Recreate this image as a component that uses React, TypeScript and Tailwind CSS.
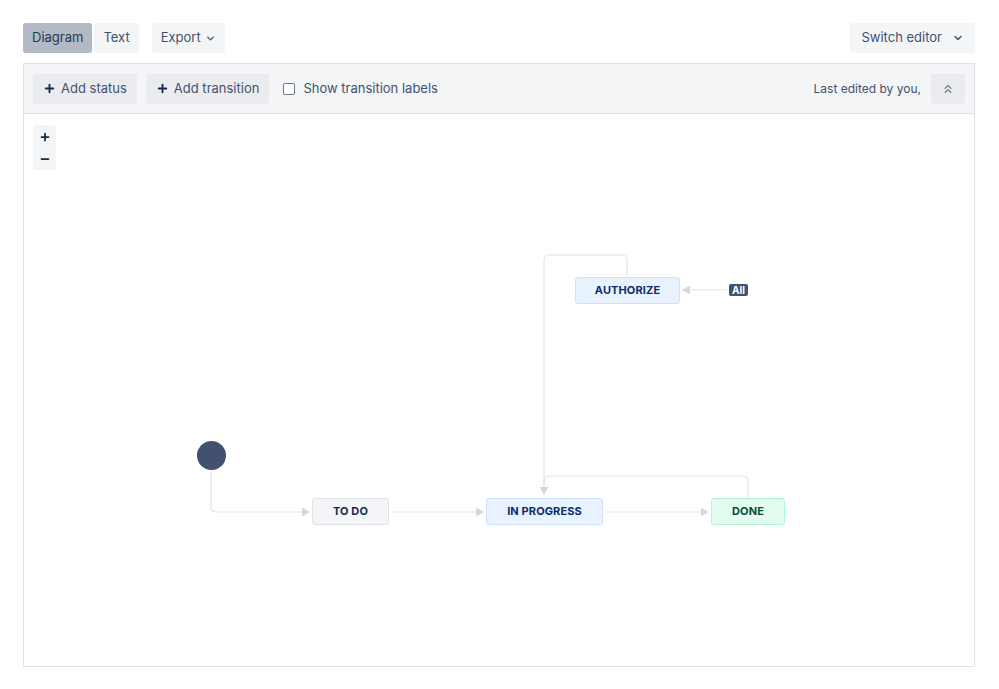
import * as React from "react";
import { ChevronDown, ChevronsUp, Plus, Minus } from "lucide-react";

type Node = {
  label: string;
  x: number;
  y: number;
  w: number;
  tone: "gray" | "blue" | "green";
};

// positions are relative to the canvas (top-left inside the panel border)
const nodes: Node[] = [
  { label: "TO DO", x: 288, y: 384, w: 77, tone: "gray" },
  { label: "IN PROGRESS", x: 462, y: 384, w: 117, tone: "blue" },
  { label: "DONE", x: 687, y: 384, w: 74, tone: "green" },
  { label: "AUTHORIZE", x: 551, y: 163, w: 105, tone: "blue" },
];

const toneClass: Record<Node["tone"], string> = {
  gray: "bg-[#f4f5f7] border-[#dfe1e6] text-[#172b4d]",
  blue: "bg-[#e9f2ff] border-[#cce0ff] text-[#0c2d6b]",
  green: "bg-[#e3fcef] border-[#abf5d1] text-[#0b4d33]",
};

function Arrow({ x, y, dir }: { x: number; y: number; dir: "right" | "down" | "left" }) {
  const pts =
    dir === "right"
      ? `${x - 8},${y - 4.5} ${x},${y} ${x - 8},${y + 4.5}`
      : dir === "left"
      ? `${x + 8},${y - 4.5} ${x},${y} ${x + 8},${y + 4.5}`
      : `${x - 4.5},${y - 8} ${x},${y} ${x + 4.5},${y - 8}`;
  return <polygon points={pts} fill="#d5d8de" />;
}

function Diagram() {
  const line = { stroke: "#e1e3e8", strokeWidth: 1.2, fill: "none" };
  return (
    <div className="relative flex-1 overflow-hidden">
      <svg className="absolute inset-0 h-full w-full">
        {/* start -> to do */}
        <path d="M187 355 V393 Q187 398 192 398 H278" {...line} />
        <Arrow x={286} y={398} dir="right" />
        {/* to do -> in progress */}
        <path d="M367 398 H452" {...line} />
        <Arrow x={460} y={398} dir="right" />
        {/* in progress -> done */}
        <path d="M581 398 H677" {...line} />
        <Arrow x={685} y={398} dir="right" />
        {/* done -> in progress */}
        <path d="M724 383 V367 Q724 362 719 362 H525 Q520 362 520 367 V374" {...line} />
        {/* authorize -> in progress */}
        <path d="M603 162 V146 Q603 141 598 141 H525 Q520 141 520 146 V374" {...line} />
        <Arrow x={520} y={381} dir="down" />
        {/* all -> authorize */}
        <path d="M703 176 H667" {...line} />
        <Arrow x={658} y={176} dir="left" />
      </svg>

      <div className="absolute left-[173px] top-[327px] h-[29px] w-[29px] rounded-full bg-[#42526e]" />

      {nodes.map((n) => (
        <div
          key={n.label}
          className={`absolute flex h-[27px] items-center justify-center rounded-[3px] border text-[11px] font-bold tracking-[0.01em] ${toneClass[n.tone]}`}
          style={{ left: n.x, top: n.y, width: n.w }}
        >
          {n.label}
        </div>
      ))}

      <div className="absolute left-[705px] top-[170px] flex h-[12px] items-center rounded-[2px] bg-[#42526e] px-[3px] text-[10px] font-bold leading-none text-white">
        All
      </div>

      <div className="absolute left-[9px] top-[11px] flex w-[23px] flex-col items-center gap-[10px] rounded-[3px] bg-[#f4f5f7] pt-[6px] pb-[5px] text-[#172b4d]">
        <Plus className="h-[12px] w-[12px]" strokeWidth={3.5} />
        <Minus className="h-[12px] w-[12px]" strokeWidth={3.5} />
      </div>
    </div>
  );
}

export default function App() {
  return (
    <div className="flex h-[689px] w-[999px] flex-col bg-white pl-[23px] pr-[24px] pt-[23px] pb-[22px] font-['Inter','Liberation_Sans',sans-serif] text-[13px] text-[#172b4d]">
      <div className="flex items-center justify-between">
        <div className="flex items-center">
          <button className="h-[30px] rounded-[3px] bg-[#b3bac5] px-[9px] text-[#253858]">Diagram</button>
          <button className="ml-[2px] h-[30px] rounded-[3px] bg-[#f4f5f7] px-[9px] text-[#42526e]">Text</button>
          <button className="ml-[13px] flex h-[30px] items-center gap-[4px] rounded-[3px] bg-[#f4f5f7] px-[9px] text-[#42526e]">
            Export
            <ChevronDown className="h-[11px] w-[11px]" strokeWidth={3} />
          </button>
        </div>
        <button className="flex h-[30px] items-center gap-[10px] rounded-[3px] bg-[#f4f5f7] px-[11px] text-[#42526e]">
          Switch editor
          <ChevronDown className="h-[12px] w-[12px]" strokeWidth={3} />
        </button>
      </div>

      <div className="mt-[10px] flex flex-1 flex-col border border-[#dfe1e6]">
        <div className="flex h-[50px] items-center justify-between border-b border-[#dfe1e6] bg-[#f4f5f7] px-[9px]">
          <div className="flex items-center">
            <button className="flex h-[30px] items-center gap-[5px] rounded-[3px] bg-[#ebecf0] px-[10px] text-[#42526e]">
              <Plus className="h-[13px] w-[13px] text-[#172b4d]" strokeWidth={3.5} />
              Add status
            </button>
            <button className="ml-[9px] flex h-[30px] items-center gap-[5px] rounded-[3px] bg-[#ebecf0] px-[10px] text-[#42526e]">
              <Plus className="h-[13px] w-[13px] text-[#172b4d]" strokeWidth={3.5} />
              Add transition
            </button>
            <label className="ml-[14px] flex items-center gap-[8px] text-[#42526e]">
              <span className="h-[12px] w-[12px] rounded-[2px] border border-[#6b778c] bg-white" />
              Show transition labels
            </label>
          </div>
          <div className="flex items-center">
            <span className="text-[12px] text-[#42526e]">Last edited by you,</span>
            <button className="ml-[10px] flex h-[30px] w-[34px] items-center justify-center rounded-[3px] bg-[#ebecf0] text-[#6b778c]">
              <ChevronsUp className="h-[14px] w-[14px]" strokeWidth={2} />
            </button>
          </div>
        </div>
        <Diagram />
      </div>
    </div>
  );
}
